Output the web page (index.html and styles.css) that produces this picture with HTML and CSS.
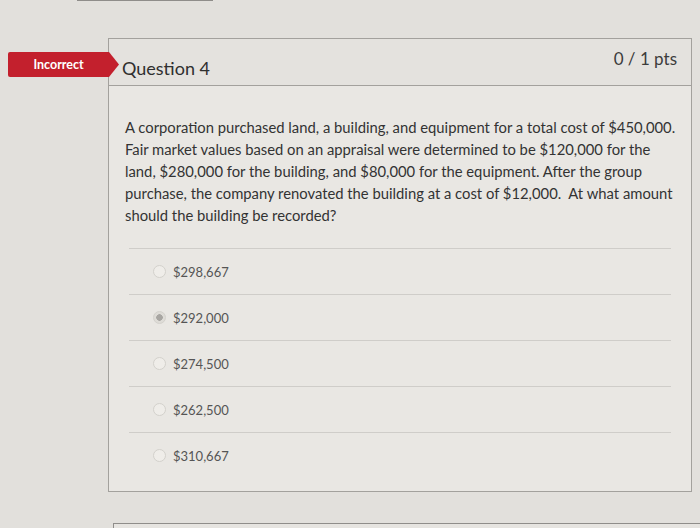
FILE: index.html
```html
<!DOCTYPE html>
<html lang="en">
<head>
    <meta charset="UTF-8">
    <title>Question 4</title>
    <link rel="stylesheet" href="styles.css">
</head>
<body>
<div class="prev-card"></div>

<div class="question">
    <div class="badge">Incorrect</div>

    <div class="question-header">
        <h2 class="question-title">Question 4</h2>
        <span class="points">0 / 1 pts</span>
    </div>

    <div class="question-body">
        <p class="question-text">A corporation purchased land, a building, and equipment for a total cost of $450,000. Fair market values based on an appraisal were determined to be $120,000 for the land, $280,000 for the building, and $80,000 for the equipment. After the group purchase, the company renovated the building at a cost of $12,000.&nbsp; At what amount should the building be recorded?</p>

        <div class="answers">
            <div class="answer"><span class="radio"></span>$298,667</div>
            <div class="answer"><span class="radio selected"></span>$292,000</div>
            <div class="answer"><span class="radio"></span>$274,500</div>
            <div class="answer"><span class="radio"></span>$262,500</div>
            <div class="answer"><span class="radio"></span>$310,667</div>
        </div>
    </div>
</div>

<div class="next-card"></div>
</body>
</html>
```

FILE: styles.css
```css
body {
    margin: 0;
    padding: 0;
    font-family: Lato, "Open Sans", sans-serif;
    background: #e2e0dc;
    color: #3a3a3a;
    height: 528px;
    overflow: hidden;
}

.prev-card {
    margin-left: 77px;
    width: 136px;
    height: 1px;
    background: #8f8d8a;
}

.question {
    position: relative;
    margin: 37px 0 0 108px;
    width: 582px;
    border: 1px solid #a3a19d;
    background: #e9e7e3;
}

.badge {
    position: absolute;
    left: -101px;
    top: 13px;
    width: 111px;
    height: 25px;
    background: #c3202d;
    color: #fff;
    font-size: 12.5px;
    font-weight: 700;
    line-height: 25px;
    padding-right: 10px;
    box-sizing: border-box;
    text-align: center;
    clip-path: polygon(0 0, 91% 0, 100% 50%, 91% 100%, 0 100%);
    border-radius: 2px 0 0 2px;
}

.question-header {
    display: flex;
    justify-content: space-between;
    height: 46px;
    background: #e4e2de;
    border-bottom: 1px solid #a3a19d;
    padding: 0 14px 0 13px;
}

.question-title {
    margin: 18px 0 0;
    font-size: 18px;
    font-weight: 400;
    color: #2f2f2f;
}

.points {
    margin-top: 9px;
    font-size: 17px;
    color: #3c3c3c;
}

.question-body {
    padding: 30px 4px 13px 16px;
}

.question-text {
    margin: 0;
    width: 553px;
    font-size: 14.8px;
    line-height: 22px;
    color: #333;
}

.answers {
    margin: 22px 16px 0 4px;
}

.answer {
    display: flex;
    align-items: center;
    gap: 7px;
    height: 45px;
    border-top: 1px solid #cfcdc9;
    padding-left: 24px;
    font-size: 13px;
    color: #555;
}

.radio {
    width: 11px;
    height: 11px;
    border-radius: 50%;
    border: 1px solid #d3d1cc;
    background: #efede9;
}

.radio.selected {
    background: radial-gradient(circle, #a8a6a2 0 3px, #dedcd7 3.5px);
}

.next-card {
    margin: 31px 0 0 113px;
    height: 10px;
    border-top: 1px solid #8f8d8a;
    border-left: 1px solid #8f8d8a;
    background: #e6e4e0;
}
```
